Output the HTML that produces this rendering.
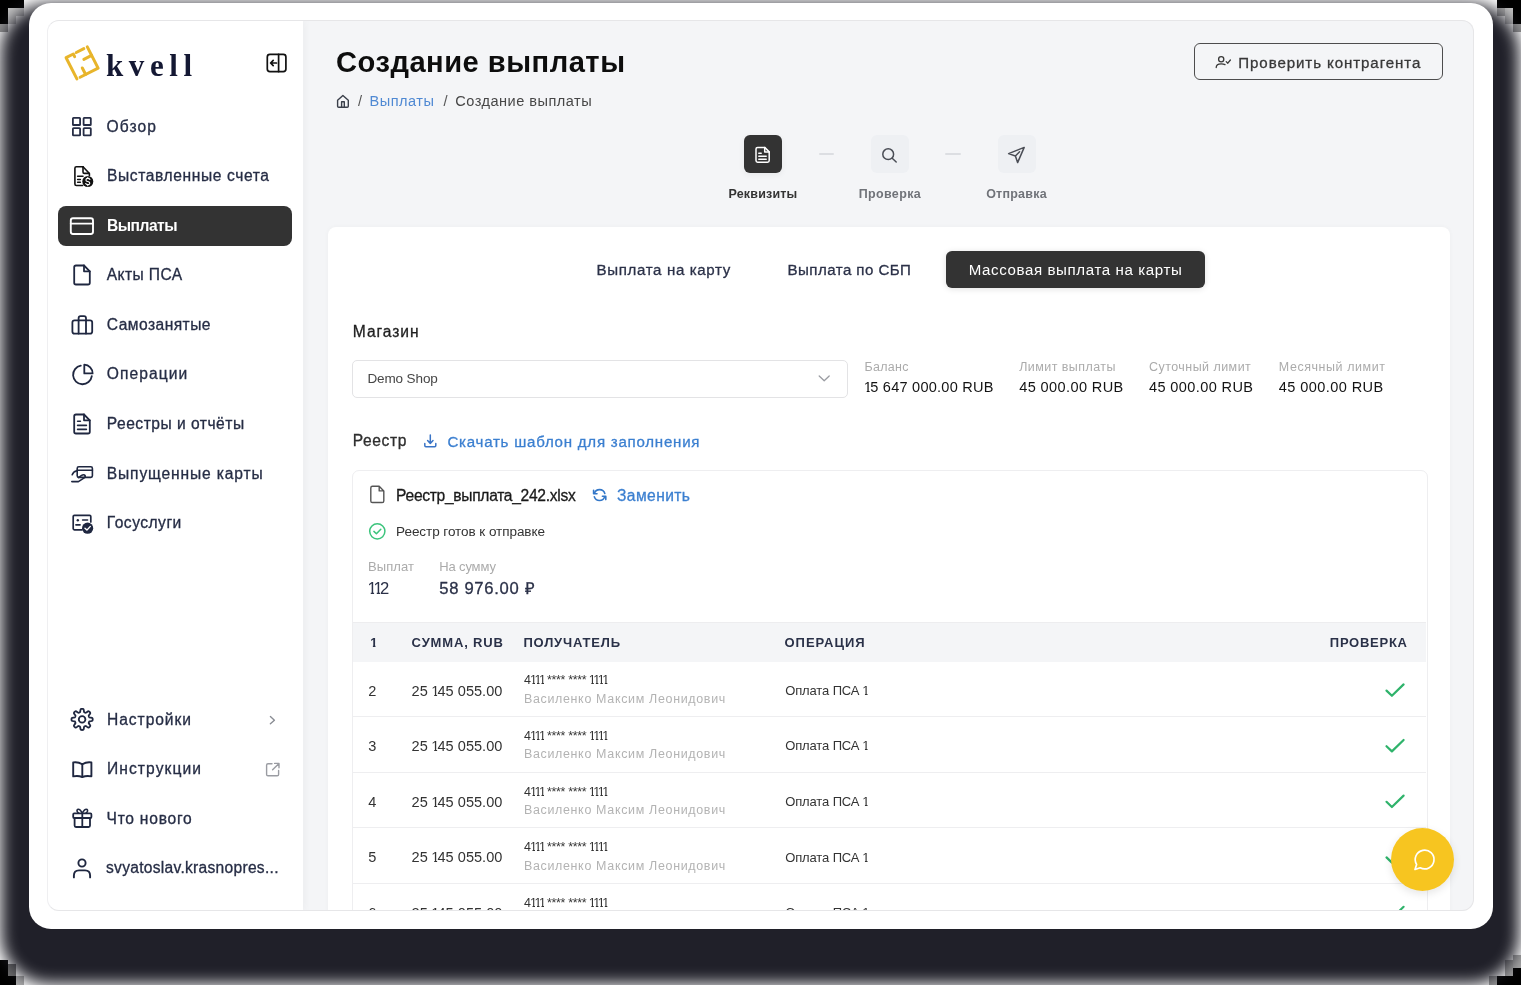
<!DOCTYPE html>
<html><head><meta charset="utf-8"><style>

html,body{margin:0;padding:0}
body{width:1521px;height:985px;overflow:hidden;position:relative;background:#ffffff;font-family:"Liberation Sans",sans-serif}
.abs{position:absolute}
.t{position:absolute;white-space:nowrap;line-height:1;font-family:"Liberation Sans",sans-serif}
.nav{-webkit-text-stroke:0.3px currentColor}
#frame{left:29px;top:2.5px;width:1464px;height:926.5px;background:#fff;border-radius:22px;box-shadow:-1px 28px 16px 27px #202029}
#screen{left:46.5px;top:20px;width:1427.3px;height:890.5px;border-radius:12px;background:#f4f5f7;overflow:hidden}
#sbord{left:46.5px;top:20px;width:1425.3px;height:888.5px;border:1px solid #e6e6e8;border-left-color:#efeff1;border-radius:12px}
#side{left:0;top:0;width:256.5px;height:891px;background:#fff;box-shadow:2px 0 7px rgba(0,0,0,0.035)}
#active{left:11.5px;top:186px;width:234px;height:39.5px;background:#333333;border-radius:8px}
#btn{left:1147.5px;top:23px;width:247px;height:35px;border:1px solid #4d4d4d;border-radius:6px}
#card{left:281px;top:206.5px;width:1122.5px;height:800px;background:#fff;border-radius:8px;box-shadow:0 0 5px rgba(0,0,0,0.035)}
#step1{left:697px;top:115px;width:38px;height:38px;background:#333;border-radius:6px;box-shadow:0 2px 6px rgba(0,0,0,0.06)}
#step2{left:824.5px;top:115px;width:38px;height:38px;background:#eef0f3;border-radius:6px}
#step3{left:951px;top:115px;width:38px;height:38px;background:#eef0f3;border-radius:6px}
#dash1{left:772px;top:133px;width:15px;height:2px;background:#dcdee2;border-radius:1px}
#dash2{left:898.5px;top:133px;width:16px;height:2px;background:#dcdee2;border-radius:1px}
#tab3{left:899.5px;top:230.7px;width:259px;height:37.2px;background:#333;border-radius:6px;box-shadow:0 1px 6px rgba(0,0,0,0.12)}
#select{left:305.8px;top:340.3px;width:493.5px;height:35.4px;border:1px solid #e3e3e5;border-radius:5px;background:#fff}
#reg{left:305.8px;top:449.7px;width:1073.5px;height:600px;border:1px solid #eeeef0;border-radius:7px;background:#fff}
#thead{left:306.5px;top:602px;width:1073px;height:39.3px;background:#f4f5f7;border-top:1px solid #ededef}
.sep{position:absolute;left:306.5px;width:1073px;height:1px;background:#eeeef0}
#chat{left:1390.5px;top:827.8px;width:63.4px;height:63.4px;border-radius:50%;background:#f7c520;box-shadow:0 3px 8px rgba(0,0,0,0.10)}
#icons{left:0;top:0;width:1521px;height:985px;clip-path:inset(20px 48px 75px 47px)}
#texts{position:absolute;left:0;top:0;width:1521px;height:985px;will-change:transform;clip-path:inset(20px 48px 75px 47px)}

.one{margin-left:-0.04em;margin-right:-0.13em;clip-path:polygon(0 0,100% 0,100% 0.72em,0.40em 0.72em,0.40em 2em,0.20em 2em,0.20em 0.72em,0 0.72em)}
</style></head><body>


<div class="abs" style="left:0;top:0;width:24px;height:8px;background:#000"></div>
<div class="abs" style="left:0;top:8px;width:8px;height:16px;background:#000"></div>
<div class="abs" style="left:8px;top:8px;width:8px;height:16px;background:#c4c4c4"></div>
<div class="abs" style="left:16px;top:8px;width:8px;height:8px;background:#c4c4c4"></div>
<div class="abs" style="left:0;top:24px;width:8px;height:8px;background:#9a9a9a"></div>
<div class="abs" style="left:1497px;top:0;width:24px;height:8px;background:#000"></div>
<div class="abs" style="left:1513px;top:8px;width:8px;height:16px;background:#000"></div>
<div class="abs" style="left:1505px;top:8px;width:8px;height:16px;background:#c4c4c4"></div>
<div class="abs" style="left:1497px;top:8px;width:8px;height:8px;background:#aaa"></div>
<div class="abs" style="left:1513px;top:24px;width:8px;height:8px;background:#9a9a9a"></div>
<div class="abs" style="left:0;top:960px;width:8px;height:25px;background:#000"></div>
<div class="abs" style="left:8px;top:976px;width:8px;height:9px;background:#000"></div>
<div class="abs" style="left:8px;top:964px;width:8px;height:12px;background:#707070"></div>
<div class="abs" style="left:16px;top:976px;width:8px;height:9px;background:#b0b0b0"></div>
<div class="abs" style="left:1513px;top:968px;width:8px;height:17px;background:#000"></div>
<div class="abs" style="left:1497px;top:976px;width:16px;height:9px;background:#000"></div>
<div class="abs" style="left:1505px;top:960px;width:8px;height:16px;background:#a0a0a0"></div>
<div class="abs" style="left:1513px;top:955px;width:8px;height:13px;background:#a8a8a8"></div>
<div class="abs" style="left:1489px;top:976px;width:8px;height:9px;background:#a0a0a0"></div>
<div class="abs" id="frame"></div>
<div class="abs" id="screen">
  <div class="abs" id="side"></div>
  <div class="abs" id="active"></div>
  <div class="abs" id="btn"></div>
  <div class="abs" id="step1"></div>
  <div class="abs" id="step2"></div>
  <div class="abs" id="step3"></div>
  <div class="abs" id="dash1"></div>
  <div class="abs" id="dash2"></div>
  <div class="abs" id="card"></div>
  <div class="abs" id="tab3"></div>
  <div class="abs" id="select"></div>
  <div class="abs" id="reg"></div>
  <div class="abs" id="thead"></div>
  <div class="sep" style="top:696.1px"></div>
  <div class="sep" style="top:751.7px"></div>
  <div class="sep" style="top:807.3px"></div>
  <div class="sep" style="top:862.9px"></div>
</div>
<div class="abs" style="left:105.8px;top:49.7px;font:700 31px/1 'Liberation Serif',serif;color:#141833;letter-spacing:5.6px;white-space:nowrap;will-change:transform">kvell</div>

<svg class="abs" id="icons" width="1521" height="985" viewBox="0 0 1521 985" fill="none" stroke-linecap="round" stroke-linejoin="round">
 <!-- logo -->
 <g transform="translate(82.1 62.9) rotate(-27)" stroke="#e8b52b" stroke-width="3.0" fill="none">
   <path d="M-3.8 -9 V-11.9 H-11.9 V11.9"/>
   <path d="M-0.5 -11.9 H8"/>
   <path d="M11.9 -11.9 V11.9 H-8.3"/>
   <path d="M11.9 -2.4 H3.2"/>
   <path d="M-2.1 11.9 V4.6"/>
 </g>
 <!-- collapse -->
 <g stroke="#111" stroke-width="1.7">
   <rect x="267.3" y="54.3" width="18.6" height="17.3" rx="2.6"/>
   <path d="M278.6 54.3 V71.6"/>
   <path d="M276.5 63 H270.8 M273.2 60.4 L270.6 63 L273.2 65.6"/>
 </g>
 <g stroke="#262d45" stroke-width="1.8">
   <!-- grid -->
   <rect x="72.9" y="117.8" width="7.2" height="7.2" rx="0.6"/>
   <rect x="83.6" y="117.8" width="7.2" height="7.2" rx="0.6"/>
   <rect x="72.9" y="128.2" width="7.2" height="7.2" rx="0.6"/>
   <rect x="83.6" y="128.2" width="7.2" height="7.2" rx="0.6"/>
 </g>
 <g stroke="#111" stroke-width="1.6">
   <!-- invoice -->
   <path d="M83 166.8 H76.4 Q74.9 166.8 74.9 168.3 V184 Q74.9 185.5 76.4 185.5 H82.6"/>
   <path d="M83 166.8 L89.4 173.5 V175.8"/>
   <path d="M83 167 V172 Q83 173.4 84.4 173.4 H89.2"/>
   <path d="M77.6 176.3 H83 M77.6 179.4 H80.4 M77.6 182.3 H80.4" stroke-width="1.5"/>
   <circle cx="87.8" cy="181.5" r="5.5" fill="#111" stroke="none"/>
   <path d="M89.9 179.4 Q89.4 178.4 87.8 178.4 Q85.9 178.4 85.9 179.9 Q85.9 181.2 87.8 181.5 Q89.8 181.8 89.8 183.2 Q89.8 184.6 87.8 184.6 Q86.2 184.6 85.7 183.6 M87.8 177.2 V178.4 M87.8 184.6 V185.8" stroke="#fff" stroke-width="1.1"/>
 </g>
 <g stroke="#fff" stroke-width="1.9">
   <!-- card -->
   <rect x="70.8" y="218.2" width="22.2" height="15.8" rx="2.2"/>
   <path d="M70.8 223.6 H93"/>
 </g>
 <g stroke="#1f2740" stroke-width="1.8">
   <!-- doc -->
   <path d="M84 265.5 H76 Q74.2 265.5 74.2 267.3 V282.7 Q74.2 284.5 76 284.5 H88 Q89.8 284.5 89.8 282.7 V271.3 Z"/>
   <path d="M84 265.5 V271.3 H89.8"/>
   <!-- briefcase -->
   <rect x="72.4" y="320.4" width="19.8" height="13.2" rx="2.2"/>
   <path d="M78.6 333.6 V318.2 Q78.6 316.2 80.6 316.2 H84 Q86 316.2 86 318.2 V333.6"/>
   <!-- pie -->
   <path d="M80.8 365.6 A9.4 9.4 0 1 0 91.8 376.2"/>
   <path d="M84.3 364.6 V373.4 H92.6 A8.8 8.8 0 0 0 84.3 364.6 Z"/>
   <!-- doc lines -->
   <path d="M84 414.5 H76 Q74.2 414.5 74.2 416.3 V431.7 Q74.2 433.5 76 433.5 H88 Q89.8 433.5 89.8 431.7 V420.3 Z"/>
   <path d="M84 414.5 V420.3 H89.8"/>
   <path d="M77.6 421.3 H80.4 M77.6 425.4 H86.4 M77.6 429.4 H86.4" stroke-width="1.6"/>
   <!-- card hand -->
   <rect x="77.2" y="466.8" width="15.2" height="10.6" rx="1.6" stroke-width="1.6"/>
   <path d="M77.2 470.2 H92.4" stroke-width="1.6"/>
   <path d="M72.2 474.8 Q73.2 471.6 77 470.8 M71.8 481.6 H78.4 L84.6 477.6 Q86 476 84.4 475 Q83.2 474.4 81.6 475.4 L78.4 477.6" stroke-width="1.6"/>
   <!-- gosuslugi -->
   <path d="M82 529.8 H74.4 Q73.2 529.8 73.2 528.6 V516.6 Q73.2 515.4 74.4 515.4 H89.6 Q90.8 515.4 90.8 516.6 V522" stroke-width="1.7"/>
   <circle cx="77.8" cy="520.2" r="1.2" fill="#1f2740" stroke="none"/>
   <path d="M76 524.8 H80" stroke-width="1.8"/>
   <path d="M82.6 520 H87.6" stroke-width="1.6"/>
   <circle cx="87.6" cy="528.2" r="5.6" fill="#1f2740" stroke="none"/>
   <path d="M85 528.3 L86.9 530.1 L90.3 526.4" stroke="#fff" stroke-width="1.4"/>
   <!-- gear -->
   <path d="M92.70 719.40 L92.68 719.82 L92.62 720.23 L92.44 720.62 L91.95 720.96 L90.93 721.16 L89.91 721.27 L89.40 721.46 L89.19 721.70 L89.05 721.96 L88.94 722.23 L88.83 722.50 L88.74 722.78 L88.72 723.11 L88.95 723.60 L89.58 724.40 L90.17 725.26 L90.28 725.84 L90.12 726.25 L89.88 726.59 L89.60 726.90 L89.29 727.18 L88.95 727.42 L88.54 727.58 L87.96 727.47 L87.10 726.88 L86.30 726.25 L85.81 726.02 L85.48 726.04 L85.20 726.13 L84.93 726.24 L84.66 726.35 L84.40 726.49 L84.16 726.70 L83.97 727.21 L83.86 728.23 L83.66 729.25 L83.32 729.74 L82.93 729.92 L82.52 729.98 L82.10 730.00 L81.68 729.98 L81.27 729.92 L80.88 729.74 L80.54 729.25 L80.34 728.23 L80.23 727.21 L80.04 726.70 L79.80 726.49 L79.54 726.35 L79.27 726.24 L79.00 726.13 L78.72 726.04 L78.39 726.02 L77.90 726.25 L77.10 726.88 L76.24 727.47 L75.66 727.58 L75.25 727.42 L74.91 727.18 L74.60 726.90 L74.32 726.59 L74.08 726.25 L73.92 725.84 L74.03 725.26 L74.62 724.40 L75.25 723.60 L75.48 723.11 L75.46 722.78 L75.37 722.50 L75.26 722.23 L75.15 721.96 L75.01 721.70 L74.80 721.46 L74.29 721.27 L73.27 721.16 L72.25 720.96 L71.76 720.62 L71.58 720.23 L71.52 719.82 L71.50 719.40 L71.52 718.98 L71.58 718.57 L71.76 718.18 L72.25 717.84 L73.27 717.64 L74.29 717.53 L74.80 717.34 L75.01 717.10 L75.15 716.84 L75.26 716.57 L75.37 716.30 L75.46 716.02 L75.48 715.69 L75.25 715.20 L74.62 714.40 L74.03 713.54 L73.92 712.96 L74.08 712.55 L74.32 712.21 L74.60 711.90 L74.91 711.62 L75.25 711.38 L75.66 711.22 L76.24 711.33 L77.10 711.92 L77.90 712.55 L78.39 712.78 L78.72 712.76 L79.00 712.67 L79.27 712.56 L79.54 712.45 L79.80 712.31 L80.04 712.10 L80.23 711.59 L80.34 710.57 L80.54 709.55 L80.88 709.06 L81.27 708.88 L81.68 708.82 L82.10 708.80 L82.52 708.82 L82.93 708.88 L83.32 709.06 L83.66 709.55 L83.86 710.57 L83.97 711.59 L84.16 712.10 L84.40 712.31 L84.66 712.45 L84.93 712.56 L85.20 712.67 L85.48 712.76 L85.81 712.78 L86.30 712.55 L87.10 711.92 L87.96 711.33 L88.54 711.22 L88.95 711.38 L89.29 711.62 L89.60 711.90 L89.88 712.21 L90.12 712.55 L90.28 712.96 L90.17 713.54 L89.58 714.40 L88.95 715.20 L88.72 715.69 L88.74 716.02 L88.83 716.30 L88.94 716.57 L89.05 716.84 L89.19 717.10 L89.40 717.34 L89.91 717.53 L90.93 717.64 L91.95 717.84 L92.44 718.18 L92.62 718.57 L92.68 718.98 Z" stroke-width="1.8"/>
   <circle cx="82.1" cy="719.4" r="3.3" stroke-width="1.8"/>
   <!-- book -->
   <path d="M82.3 764.2 Q78 761.6 73.2 762.4 V776.4 Q78 775.4 82.3 777 Q86.6 775.4 91.4 776.4 V762.4 Q86.6 761.6 82.3 764.2 Z" stroke-width="1.9"/>
   <path d="M82.3 764.2 V776.6" stroke-width="1.9"/>
   <!-- gift -->
   <rect x="73.2" y="813.4" width="18.2" height="4.6" rx="1" stroke-width="1.8"/>
   <path d="M74.6 818 V825.6 Q74.6 827 76 827 H88.6 Q90 827 90 825.6 V818" stroke-width="1.8"/>
   <path d="M82.3 813.4 V827" stroke-width="1.8"/>
   <path d="M82.3 813.2 Q79.8 808.4 77.6 809.4 Q76 811 78.6 813.2 M82.3 813.2 Q84.8 808.4 87 809.4 Q88.6 811 86 813.2" stroke-width="1.6"/>
   <!-- user -->
   <circle cx="82" cy="863" r="3.6" stroke-width="1.9"/>
   <path d="M73.9 877.4 V875.6 Q73.9 870.4 79 870.4 H85 Q90.1 870.4 90.1 875.6 V877.4" stroke-width="1.9"/>
 </g>
 <!-- settings chevron / external -->
 <path d="M270.4 716.6 L274.4 720.2 L270.4 723.8" stroke="#8a8d94" stroke-width="1.4"/>
 <g stroke="#9a9ca2" stroke-width="1.4">
   <path d="M272 763.8 H268 Q266.6 763.8 266.6 765.2 V774.4 Q266.6 775.8 268 775.8 H277.2 Q278.6 775.8 278.6 774.4 V770.4"/>
   <path d="M274.6 763.4 H279 V767.8 M279 763.4 L272.6 769.8"/>
 </g>
 <!-- home -->
 <path d="M337.6 100.2 L342.9 95.5 L348.3 100.2 V106.2 Q348.3 107.3 347.2 107.3 H338.7 Q337.6 107.3 337.6 106.2 Z M341.6 107.3 V101.8 H344.3 V107.3" stroke="#3a3f4a" stroke-width="1.4"/>
 <!-- btn user check -->
 <g stroke="#383838" stroke-width="1.3">
   <circle cx="1221.2" cy="59.2" r="2.6"/>
   <path d="M1216.2 67.6 Q1216.2 63.8 1221.2 63.8 Q1223.6 63.8 1225 64.6"/>
   <path d="M1226.2 61.6 L1227.8 63.2 L1230.4 60"/>
 </g>
 <!-- step icons -->
 <g stroke="#fff" stroke-width="1.5">
   <path d="M764.7 147.4 H757.6 Q756 147.4 756 149 V160.6 Q756 162.2 757.6 162.2 H767.6 Q769.2 162.2 769.2 160.6 V151.9 Z"/>
   <path d="M764.7 147.4 V151.9 H769.2"/>
   <path d="M758.8 153.2 H761.2 M758.8 156.2 H766.2 M758.8 159.2 H766.2"/>
 </g>
 <g stroke="#4a4d55" stroke-width="1.5">
   <circle cx="888.2" cy="154.2" r="5.4"/>
   <path d="M892.2 158.2 L896.2 162"/>
   <path d="M1024.2 147.4 L1008.6 153.6 L1015.4 156 L1017.6 162.6 Z M1015.4 156 L1019.6 151.8"/>
 </g>
 <!-- select chevron -->
 <path d="M819.2 376 L824.2 380.8 L829.2 376" stroke="#9a9ca2" stroke-width="1.3"/>
 <!-- download -->
 <g stroke="#3a74c6" stroke-width="1.5">
   <path d="M430.3 435 V443.4 M427.6 440.6 L430.3 443.4 L433 440.6"/>
   <path d="M424.8 443.6 V445.6 Q424.8 446.7 425.9 446.7 H434.7 Q435.8 446.7 435.8 445.6 V443.6"/>
 </g>
 <!-- file icon -->
 <path d="M379.2 486.3 H372.4 Q370.8 486.3 370.8 487.9 V500.9 Q370.8 502.5 372.4 502.5 H382.2 Q383.8 502.5 383.8 500.9 V490.9 Z M379.2 486.3 V490.9 H383.8" stroke="#555" stroke-width="1.4"/>
 <!-- refresh -->
 <g stroke="#3377c8" stroke-width="1.6">
   <path d="M594.4 493.2 A5.5 5.5 0 0 1 604.8 493.4"/>
   <path d="M594.3 496.8 A5.5 5.5 0 0 0 604.7 496.8"/>
   <path d="M593.6 490.3 V493.7 H597"/>
   <path d="M605.8 499.6 V496.2 H602.4"/>
 </g>
 <!-- ready check circle -->
 <circle cx="377.3" cy="531.3" r="7.6" stroke="#3cc47c" stroke-width="1.5"/>
 <path d="M373.9 531.4 L376.4 533.8 L380.8 529.2" stroke="#3cc47c" stroke-width="1.5"/>
 <!-- row checks -->
 <g stroke="#2fb36b" stroke-width="2.2">
   <path d="M1386.5 690.6 L1391.9 695.8 L1403.6 684.4"/>
   <path d="M1386.5 746.2 L1391.9 751.4 L1403.6 740"/>
   <path d="M1386.5 801.8 L1391.9 807 L1403.6 795.6"/>
   <path d="M1386.5 857.4 L1391.9 862.6 L1403.6 851.2"/>
   <path d="M1386.5 913 L1391.9 918.2 L1403.6 906.8"/>
 </g>
</svg>

<div id="texts">
<div class="t nav" style="left:106.5px;top:118.9px;font-size:15.6px;font-weight:400;color:#262d45;letter-spacing:1.088px">Обзор</div>
<div class="t nav" style="left:107.0px;top:167.7px;font-size:15.6px;font-weight:400;color:#262d45;letter-spacing:0.605px">Выставленные счета</div>
<div class="t" style="left:107.0px;top:217.7px;font-size:15.6px;font-weight:700;color:#ffffff;letter-spacing:-0.505px">Выплаты</div>
<div class="t nav" style="left:106.8px;top:266.8px;font-size:15.6px;font-weight:400;color:#262d45;letter-spacing:0.384px">Акты ПСА</div>
<div class="t nav" style="left:106.8px;top:316.5px;font-size:15.6px;font-weight:400;color:#262d45;letter-spacing:0.447px">Самозанятые</div>
<div class="t nav" style="left:106.8px;top:366.2px;font-size:15.6px;font-weight:400;color:#262d45;letter-spacing:1.064px">Операции</div>
<div class="t nav" style="left:106.8px;top:416.0px;font-size:15.6px;font-weight:400;color:#262d45;letter-spacing:0.495px">Реестры и отчёты</div>
<div class="t nav" style="left:106.8px;top:465.7px;font-size:15.6px;font-weight:400;color:#262d45;letter-spacing:0.844px">Выпущенные карты</div>
<div class="t nav" style="left:106.8px;top:514.9px;font-size:15.6px;font-weight:400;color:#262d45;letter-spacing:0.488px">Госуслуги</div>
<div class="t nav" style="left:107.0px;top:711.6px;font-size:15.6px;font-weight:400;color:#262d45;letter-spacing:0.941px">Настройки</div>
<div class="t nav" style="left:107.0px;top:760.8px;font-size:15.6px;font-weight:400;color:#262d45;letter-spacing:1.085px">Инструкции</div>
<div class="t nav" style="left:106.5px;top:810.7px;font-size:15.6px;font-weight:400;color:#262d45;letter-spacing:0.750px">Что нового</div>
<div class="t nav" style="left:106.0px;top:860.0px;font-size:15.6px;font-weight:400;color:#262d45;letter-spacing:0.277px">svyatoslav.krasnopres...</div>
<div class="t" style="left:336.0px;top:48.2px;font-size:29.12px;font-weight:700;color:#0d0d0d;letter-spacing:0.503px">Создание выплаты</div>
<div class="t" style="left:357.9px;top:94.2px;font-size:14.56px;font-weight:400;color:#555;letter-spacing:0.000px">/</div>
<div class="t" style="left:369.6px;top:94.2px;font-size:14.56px;font-weight:400;color:#4f89d3;letter-spacing:0.496px">Выплаты</div>
<div class="t" style="left:443.4px;top:94.2px;font-size:14.56px;font-weight:400;color:#555;letter-spacing:0.000px">/</div>
<div class="t" style="left:455.3px;top:94.2px;font-size:14.56px;font-weight:400;color:#474747;letter-spacing:0.480px">Создание выплаты</div>
<div class="t nav" style="left:1238.3px;top:54.7px;font-size:15.08px;font-weight:400;color:#383838;letter-spacing:0.912px">Проверить контрагента</div>
<div class="t" style="left:728.5px;top:187.8px;font-size:12.48px;font-weight:700;color:#333333;letter-spacing:0.195px">Реквизиты</div>
<div class="t" style="left:858.7px;top:187.8px;font-size:12.48px;font-weight:700;color:#707379;letter-spacing:0.368px">Проверка</div>
<div class="t" style="left:986.2px;top:187.8px;font-size:12.48px;font-weight:700;color:#707379;letter-spacing:0.238px">Отправка</div>
<div class="t nav" style="left:596.6px;top:262.0px;font-size:15.08px;font-weight:400;color:#2b3148;letter-spacing:0.639px">Выплата на карту</div>
<div class="t nav" style="left:787.6px;top:262.0px;font-size:15.08px;font-weight:400;color:#2b3148;letter-spacing:0.439px">Выплата по СБП</div>
<div class="t" style="left:968.7px;top:262.2px;font-size:15.08px;font-weight:400;color:#ffffff;letter-spacing:0.607px">Массовая выплата на карты</div>
<div class="t nav" style="left:352.8px;top:323.6px;font-size:15.6px;font-weight:400;color:#1f1f1f;letter-spacing:0.941px">Магазин</div>
<div class="t" style="left:367.4px;top:371.5px;font-size:13.52px;font-weight:400;color:#474747;letter-spacing:-0.122px">Demo Shop</div>
<div class="t" style="left:864.4px;top:361.1px;font-size:12.48px;font-weight:400;color:#ababab;letter-spacing:0.329px">Баланс</div>
<div class="t" style="left:864.4px;top:380.1px;font-size:14.56px;font-weight:400;color:#141414;letter-spacing:0.236px"><span class="one">1</span>5 647 000.00 RUB</div>
<div class="t" style="left:1019.2px;top:361.1px;font-size:12.48px;font-weight:400;color:#ababab;letter-spacing:0.449px">Лимит выплаты</div>
<div class="t" style="left:1019.2px;top:380.1px;font-size:14.56px;font-weight:400;color:#141414;letter-spacing:0.385px">45 000.00 RUB</div>
<div class="t" style="left:1149.0px;top:361.1px;font-size:12.48px;font-weight:400;color:#ababab;letter-spacing:0.467px">Суточный лимит</div>
<div class="t" style="left:1149.0px;top:380.1px;font-size:14.56px;font-weight:400;color:#141414;letter-spacing:0.376px">45 000.00 RUB</div>
<div class="t" style="left:1278.8px;top:361.1px;font-size:12.48px;font-weight:400;color:#ababab;letter-spacing:0.575px">Месячный лимит</div>
<div class="t" style="left:1278.8px;top:380.1px;font-size:14.56px;font-weight:400;color:#141414;letter-spacing:0.410px">45 000.00 RUB</div>
<div class="t nav" style="left:352.8px;top:432.5px;font-size:15.6px;font-weight:400;color:#2e2e2e;letter-spacing:0.566px">Реестр</div>
<div class="t nav" style="left:447.4px;top:433.8px;font-size:15.08px;font-weight:400;color:#3b7fd0;letter-spacing:0.756px">Скачать шаблон для заполнения</div>
<div class="t nav" style="left:396.1px;top:487.6px;font-size:15.6px;font-weight:400;color:#1a1a1a;letter-spacing:-0.302px">Реестр_выплата_242.xlsx</div>
<div class="t nav" style="left:617.0px;top:487.6px;font-size:15.6px;font-weight:400;color:#3b7fd0;letter-spacing:0.417px">Заменить</div>
<div class="t" style="left:396.1px;top:525.1px;font-size:13.52px;font-weight:400;color:#333333;letter-spacing:-0.060px">Реестр готов к отправке</div>
<div class="t" style="left:368.1px;top:559.7px;font-size:13.0px;font-weight:400;color:#ababab;letter-spacing:0.051px">Выплат</div>
<div class="t" style="left:439.2px;top:559.7px;font-size:13.0px;font-weight:400;color:#ababab;letter-spacing:-0.130px">На сумму</div>
<div class="t" style="left:368.1px;top:580.9px;font-size:16.64px;font-weight:400;color:#2b3148;letter-spacing:-0.463px"><span class="one">1</span><span class="one">1</span>2</div>
<div class="t nav" style="left:439.2px;top:580.9px;font-size:16.64px;font-weight:400;color:#2b3148;letter-spacing:0.701px">58 976.00 ₽</div>
<div class="t" style="left:370.8px;top:635.8px;font-size:13.0px;font-weight:700;color:#2a3148;letter-spacing:0.000px"><span class="one">1</span></div>
<div class="t" style="left:411.6px;top:635.8px;font-size:13.0px;font-weight:700;color:#2a3148;letter-spacing:0.839px">СУММА, RUB</div>
<div class="t" style="left:523.4px;top:635.8px;font-size:13.0px;font-weight:700;color:#2a3148;letter-spacing:0.811px">ПОЛУЧАТЕЛЬ</div>
<div class="t" style="left:784.5px;top:635.8px;font-size:13.0px;font-weight:700;color:#2a3148;letter-spacing:0.981px">ОПЕРАЦИЯ</div>
<div class="t" style="left:1329.8px;top:635.8px;font-size:13.0px;font-weight:700;color:#2a3148;letter-spacing:0.741px">ПРОВЕРКА</div>
<div class="t" style="left:368.2px;top:683.6px;font-size:14.56px;font-weight:400;color:#333333;letter-spacing:0.000px">2</div>
<div class="t" style="left:411.6px;top:683.6px;font-size:14.56px;font-weight:400;color:#333333;letter-spacing:0.018px">25 <span class="one">1</span>45 055.00</div>
<div class="t" style="left:523.9px;top:674.4px;font-size:12.48px;font-weight:400;color:#333333;letter-spacing:-0.353px">4<span class="one">1</span><span class="one">1</span><span class="one">1</span> **** **** <span class="one">1</span><span class="one">1</span><span class="one">1</span><span class="one">1</span></div>
<div class="t" style="left:523.9px;top:692.8px;font-size:12.48px;font-weight:400;color:#b3b3b3;letter-spacing:0.668px">Василенко Максим Леонидович</div>
<div class="t" style="left:785.2px;top:683.8px;font-size:13.0px;font-weight:400;color:#333333;letter-spacing:-0.127px">Оплата ПСА <span class="one">1</span></div>
<div class="t" style="left:368.2px;top:739.2px;font-size:14.56px;font-weight:400;color:#333333;letter-spacing:0.000px">3</div>
<div class="t" style="left:411.6px;top:739.2px;font-size:14.56px;font-weight:400;color:#333333;letter-spacing:0.018px">25 <span class="one">1</span>45 055.00</div>
<div class="t" style="left:523.9px;top:730.0px;font-size:12.48px;font-weight:400;color:#333333;letter-spacing:-0.353px">4<span class="one">1</span><span class="one">1</span><span class="one">1</span> **** **** <span class="one">1</span><span class="one">1</span><span class="one">1</span><span class="one">1</span></div>
<div class="t" style="left:523.9px;top:748.4px;font-size:12.48px;font-weight:400;color:#b3b3b3;letter-spacing:0.668px">Василенко Максим Леонидович</div>
<div class="t" style="left:785.2px;top:739.4px;font-size:13.0px;font-weight:400;color:#333333;letter-spacing:-0.127px">Оплата ПСА <span class="one">1</span></div>
<div class="t" style="left:368.2px;top:794.8px;font-size:14.56px;font-weight:400;color:#333333;letter-spacing:0.000px">4</div>
<div class="t" style="left:411.6px;top:794.8px;font-size:14.56px;font-weight:400;color:#333333;letter-spacing:0.018px">25 <span class="one">1</span>45 055.00</div>
<div class="t" style="left:523.9px;top:785.6px;font-size:12.48px;font-weight:400;color:#333333;letter-spacing:-0.353px">4<span class="one">1</span><span class="one">1</span><span class="one">1</span> **** **** <span class="one">1</span><span class="one">1</span><span class="one">1</span><span class="one">1</span></div>
<div class="t" style="left:523.9px;top:804.0px;font-size:12.48px;font-weight:400;color:#b3b3b3;letter-spacing:0.668px">Василенко Максим Леонидович</div>
<div class="t" style="left:785.2px;top:795.0px;font-size:13.0px;font-weight:400;color:#333333;letter-spacing:-0.127px">Оплата ПСА <span class="one">1</span></div>
<div class="t" style="left:368.2px;top:850.4px;font-size:14.56px;font-weight:400;color:#333333;letter-spacing:0.000px">5</div>
<div class="t" style="left:411.6px;top:850.4px;font-size:14.56px;font-weight:400;color:#333333;letter-spacing:0.018px">25 <span class="one">1</span>45 055.00</div>
<div class="t" style="left:523.9px;top:841.2px;font-size:12.48px;font-weight:400;color:#333333;letter-spacing:-0.353px">4<span class="one">1</span><span class="one">1</span><span class="one">1</span> **** **** <span class="one">1</span><span class="one">1</span><span class="one">1</span><span class="one">1</span></div>
<div class="t" style="left:523.9px;top:859.6px;font-size:12.48px;font-weight:400;color:#b3b3b3;letter-spacing:0.668px">Василенко Максим Леонидович</div>
<div class="t" style="left:785.2px;top:850.5px;font-size:13.0px;font-weight:400;color:#333333;letter-spacing:-0.127px">Оплата ПСА <span class="one">1</span></div>
<div class="t" style="left:368.2px;top:906.0px;font-size:14.56px;font-weight:400;color:#333333;letter-spacing:0.000px">6</div>
<div class="t" style="left:411.6px;top:906.0px;font-size:14.56px;font-weight:400;color:#333333;letter-spacing:0.018px">25 <span class="one">1</span>45 055.00</div>
<div class="t" style="left:523.9px;top:896.8px;font-size:12.48px;font-weight:400;color:#333333;letter-spacing:-0.353px">4<span class="one">1</span><span class="one">1</span><span class="one">1</span> **** **** <span class="one">1</span><span class="one">1</span><span class="one">1</span><span class="one">1</span></div>
<div class="t" style="left:523.9px;top:915.2px;font-size:12.48px;font-weight:400;color:#b3b3b3;letter-spacing:0.668px">Василенко Максим Леонидович</div>
<div class="t" style="left:785.2px;top:906.1px;font-size:13.0px;font-weight:400;color:#333333;letter-spacing:-0.127px">Оплата ПСА <span class="one">1</span></div>
</div>

<div class="abs" id="sbord"></div>
<div class="abs" id="chat"><svg width="64" height="64" viewBox="0 0 64 64" fill="none" stroke="#fff" stroke-width="1.7" stroke-linejoin="round"><path d="M24 41.5 L25.6 36.4 A9.4 9.4 0 1 1 29.2 39.8 Z"/></svg></div>

</body></html>
